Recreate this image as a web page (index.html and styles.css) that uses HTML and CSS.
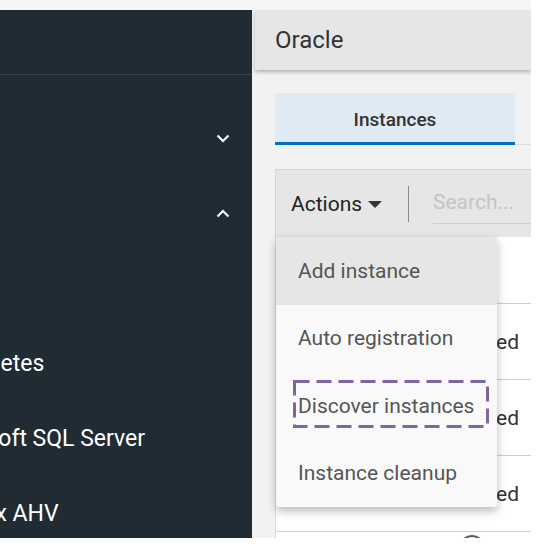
FILE: index.html
```html
<!DOCTYPE html>
<html>
<head>
<meta charset="utf-8">
<link rel="stylesheet" href="styles.css">
</head>
<body>
<div class="topstrip"></div>
<div class="main">
  <nav class="sidebar">
    <div class="side-head"></div>
    <ul class="side-list">
      <li class="side-item chev-row"><span></span><svg class="chev" width="14" height="9" viewBox="0 0 14 9"><polyline points="1.5,1.5 7,7 12.5,1.5" fill="none" stroke="#fff" stroke-width="2.2"/></svg></li>
      <li class="side-item chev-row"><span></span><svg class="chev" width="14" height="9" viewBox="0 0 14 9"><polyline points="1.5,7.5 7,2 12.5,7.5" fill="none" stroke="#fff" stroke-width="2.2"/></svg></li>
      <li class="side-item"></li>
      <li class="side-item"><span class="side-label">Kubernetes</span></li>
      <li class="side-item"><span class="side-label">Microsoft SQL Server</span></li>
      <li class="side-item"><span class="side-label">Nutanix AHV</span></li>
    </ul>
  </nav>
  <section class="content">
    <header class="page-head">Oracle</header>
    <div class="tabs">
      <div class="tab active">Instances</div>
    </div>
    <div class="panel">
      <div class="toolbar">
        <div class="actions">Actions <svg class="caret" width="14" height="8" viewBox="0 0 14 8"><polygon points="0,0 14,0 7,7" fill="#333"/></svg></div>
        <div class="divider"></div>
        <div class="search">Search...</div>
      </div>
      <div class="table">
        <div class="row head"></div>
        <div class="row"><span class="cell-status">Registered</span></div>
        <div class="row"><span class="cell-status">Registered</span></div>
        <div class="row"><span class="cell-status">Registered</span></div>
        <div class="row last"><span class="circle"></span></div>
      </div>
      <ul class="menu">
        <li class="menu-item hover">Add instance</li>
        <li class="menu-item">Auto registration</li>
        <li class="menu-item">Discover instances
          <svg class="highlight" width="196" height="48" viewBox="0 0 196 48"><rect x="1.5" y="1.5" width="193" height="45" fill="none" stroke="#8064a2" stroke-width="3" stroke-dasharray="15 7"/></svg>
        </li>
        <li class="menu-item">Instance cleanup</li>
      </ul>
    </div>
  </section>
</div>
</body>
</html>
```

FILE: styles.css
```css
* { box-sizing: border-box; }
html, body { margin: 0; padding: 0; }
body {
  background: #ffffff;
  font-family: Roboto, "Liberation Sans", sans-serif;
  width: 547px;
  height: 544px;
  overflow: hidden;
}
.topstrip {
  width: 531px;
  height: 10px;
  background: #f6f6f6;
}
.main {
  display: flex;
  width: 531px;
  height: 528px;
}
.sidebar {
  width: 252px;
  flex: none;
  background: #212b34;
  overflow: hidden;
}
.side-head {
  height: 65px;
  border-bottom: 1px solid #36414b;
}
.side-list {
  list-style: none;
  margin: 0;
  padding: 26px 0 0 0;
}
.side-item {
  height: 75px;
  display: flex;
  align-items: center;
  justify-content: space-between;
  padding-right: 22px;
  color: #ffffff;
  font-size: 23px;
}
.side-label {
  margin-left: -72px;
  white-space: nowrap;
}
.chev { display: block; }
.content {
  flex: 1;
  background: #f2f2f2;
  padding-left: 3px;
  position: relative;
  overflow: hidden;
}
.page-head {
  height: 60px;
  background: #e6e6e6;
  box-shadow: 0 2px 4px rgba(0,0,0,0.28);
  font-size: 24px;
  color: #333333;
  padding-left: 20px;
  display: flex;
  align-items: center;
  position: relative;
  z-index: 1;
}
.tabs {
  margin: 23px 0 0 20px;
  border-bottom: 1px solid #dedede;
  display: flex;
}
.tab {
  width: 240px;
  height: 52px;
  background: #e0eaf3;
  border-bottom: 3px solid #0070c9;
  margin-bottom: -1px;
  font-size: 19px;
  font-weight: 500;
  color: #333;
  display: flex;
  align-items: center;
  justify-content: center;
  padding-top: 3px;
}
.panel {
  margin: 24px 0 0 20px;
  position: relative;
}
.toolbar {
  height: 68px;
  background: #e6e6e6;
  border-top: 1px solid #d4d4d4;
  border-left: 1px solid #d4d4d4;
  display: flex;
  align-items: center;
}
.actions {
  padding-left: 15px;
  font-size: 21px;
  color: #222;
  display: flex;
  align-items: center;
  gap: 6px;
  width: 132px;
}
.caret { display: block; margin-top: 2px; }
.divider {
  width: 1px;
  height: 36px;
  background: #8c8c8c;
}
.search {
  margin-left: 24px;
  flex: 1;
  font-size: 21px;
  color: #c4c4c4;
  height: 38px;
  line-height: 32px;
  border-bottom: 1px solid #d0d0d0;
  margin-top: 2px;
}
.table {
  background: #ffffff;
  border-left: 1px solid #dcdcdc;
}
.row {
  height: 76px;
  border-bottom: 1px solid #cfcfcf;
  display: flex;
  align-items: center;
  justify-content: flex-end;
  padding-right: 12px;
  font-size: 21px;
  color: #333;
}
.row.head { height: 67px; }
.row.last { border-bottom: none; align-items: flex-start; justify-content: flex-start; }
.circle {
  margin: 3px 0 0 183px;
  width: 26px;
  height: 26px;
  border: 2px solid #555;
  border-radius: 50%;
}
.menu {
  position: absolute;
  left: 1px;
  top: 68px;
  width: 221px;
  margin: 0;
  padding: 0;
  list-style: none;
  background: #f9f9f9;
  box-shadow: 0 4px 10px rgba(0,0,0,0.28);
  border-radius: 0 0 3px 3px;
}
.menu-item {
  height: 67.5px;
  display: flex;
  align-items: center;
  padding-left: 22px;
  font-size: 21px;
  color: #555;
  position: relative;
  white-space: nowrap;
}
.menu-item.hover { background: #e6e6e6; }
.highlight {
  position: absolute;
  left: 17px;
  top: 8px;
}
```
